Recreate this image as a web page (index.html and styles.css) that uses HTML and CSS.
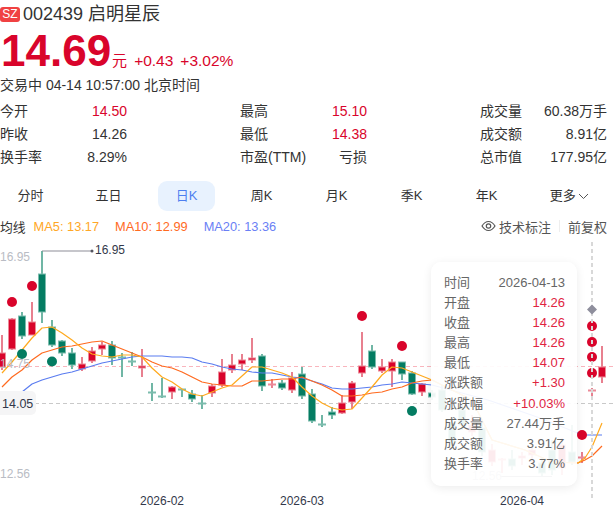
FILE: index.html
```html
<!DOCTYPE html>
<html lang="zh-CN">
<head>
    <meta charset="UTF-8">
    <meta name="viewport" content="width=device-width, initial-scale=1.0">
    <title>启明星辰</title>
    <link rel="stylesheet" href="styles.css">
</head>
<body>
    <div class="title-row">
        <span class="badge">SZ</span>
        <span class="stock-name">002439 启明星辰</span>
    </div>
    <div class="price-row">
        <span class="price">14.69</span>
        <span class="unit">元</span>
        <span class="change">+0.43</span>
        <span class="change">+3.02%</span>
    </div>
    <div class="status">交易中 04-14 10:57:00 北京时间</div>

    <div class="stats">
        <div class="stat"><span>今开</span><span class="up">14.50</span></div>
        <div class="stat"><span>最高</span><span class="up">15.10</span></div>
        <div class="stat"><span>成交量</span><span>60.38万手</span></div>
        <div class="stat"><span>昨收</span><span>14.26</span></div>
        <div class="stat"><span>最低</span><span class="up">14.38</span></div>
        <div class="stat"><span>成交额</span><span>8.91亿</span></div>
        <div class="stat"><span>换手率</span><span>8.29%</span></div>
        <div class="stat"><span>市盈(TTM)</span><span>亏损</span></div>
        <div class="stat"><span>总市值</span><span>177.95亿</span></div>
    </div>

    <div class="tabs">
        <div class="tab tab-wide">分时</div>
        <div class="tab tab-wide">五日</div>
        <div class="tab active">日K</div>
        <div class="tab">周K</div>
        <div class="tab">月K</div>
        <div class="tab">季K</div>
        <div class="tab">年K</div>
        <div class="tab tab-more">更多
            <svg class="chevron" width="11" height="7" viewBox="0 0 11 7"><path d="M1 1l4.500 4.500L10 1"/></svg>
        </div>
    </div>

    <div class="legend">
        <span class="legend-title">均线</span>
        <span class="ma5">MA5: 13.17</span>
        <span class="ma10">MA10: 12.99</span>
        <span class="ma20">MA20: 13.36</span>
        <span class="legend-tools">
            <svg class="eye" width="15" height="12" viewBox="0 0 15 12"><path d="M1 6c2-3.200 4-4.500 6.500-4.500S12 2.800 14 6c-2 3.200-4 4.500-6.500 4.500S3 9.200 1 6z"/><circle cx="7.500" cy="6" r="2.200"/></svg>
            <span>技术标注</span>
            <i class="divider"></i>
            <span>前复权</span>
        </span>
    </div>

    <div class="chart">
        <svg class="chart-svg" width="614" height="283" viewBox="0 240 614 283">
            <line class="guide guide-last" x1="0" y1="366.500" x2="614" y2="366.500"/>
            <line class="guide guide-cross" x1="0" y1="403.500" x2="614" y2="403.500"/>
            <g id="candles"></g>
            <g id="lines"></g>
            <g id="dots"></g>
            <line class="crosshair" x1="592" y1="242" x2="592" y2="498"/>
            <path class="diamond" d="M592 304.500l5 5-5 5-5-5z"/>
            <path class="peak-line" d="M42 251H92"/>
            <circle class="peak-dot" cx="92" cy="251" r="1.500"/>
            <text class="peak-text" x="95" y="254">16.95</text>
            <path class="peak-line" d="M500 476.500H552"/>
            <text class="axis" x="0" y="261">16.95</text>
            <text class="axis" x="0" y="367.500">14.75</text>
            <text class="axis" x="0" y="478">12.56</text>
            <text class="axis" x="472" y="480">12.56</text>
            <rect class="cross-box" x="-6" y="391" width="42" height="24" rx="5"/>
            <text class="cross-text" x="2" y="407.500">14.05</text>
            <text class="date" x="162" y="505">2026-02</text>
            <text class="date" x="302" y="505">2026-03</text>
            <text class="date" x="522" y="505">2026-04</text>
        </svg>

        <div class="tooltip">
            <div class="tip-row"><span>时间</span><span>2026-04-13</span></div>
            <div class="tip-row"><span>开盘</span><span class="tip-up">14.26</span></div>
            <div class="tip-row"><span>收盘</span><span class="tip-up">14.26</span></div>
            <div class="tip-row"><span>最高</span><span class="tip-up">14.26</span></div>
            <div class="tip-row"><span>最低</span><span class="tip-up">14.07</span></div>
            <div class="tip-row"><span>涨跌额</span><span class="tip-up">+1.30</span></div>
            <div class="tip-row"><span>涨跌幅</span><span class="tip-up">+10.03%</span></div>
            <div class="tip-row"><span>成交量</span><span>27.44万手</span></div>
            <div class="tip-row"><span>成交额</span><span>3.91亿</span></div>
            <div class="tip-row"><span>换手率</span><span>3.77%</span></div>
        </div>
    </div>

    <script src="chart.js"></script>
</body>
</html>
```

FILE: styles.css
```css
body { margin: 0; width: 614px; height: 523px; overflow: hidden; background: #fff; color: #333; font-family: "Liberation Sans", "Noto Sans CJK SC", sans-serif; font-size: 14px; }

.title-row { display: flex; align-items: center; gap: 3px; height: 26px; padding-top: 1px; }
.badge { width: 20px; height: 15px; border-radius: 3px; background: #f04142; color: #fff; font-size: 12px; line-height: 15px; text-align: center; }
.stock-name { margin-top: -5px; font-size: 18px; }

.price-row { display: flex; align-items: baseline; height: 45px; padding-top: 1px; padding-left: 1px; color: #d9042b; }
.price { font-size: 44px; line-height: 46px; font-weight: bold; }
.unit { margin-left: 1px; font-size: 15px; }
.change { margin-left: 7px; font-size: 15.500px; }

.status { height: 20px; margin-top: 2px; line-height: 20px; }

.stats { display: grid; grid-template-columns: 127px 127px 127px; column-gap: 113px; row-gap: 3px; margin-top: 6px; }
.stat { display: flex; justify-content: space-between; height: 20px; line-height: 20px; }
.up { color: #d9042b; }

.tabs { display: flex; gap: 18px; margin-top: 14px; padding-left: 2px; }
.tab { width: 57px; height: 30px; border-radius: 9px; line-height: 30px; text-align: center; font-size: 13px; }
.tab-wide { margin-right: 3px; }
.tab.active { background: #e8f2fe; color: #4e7ff0; }
.tab-more { width: 73px; }
.chevron { margin-left: -1px; fill: none; stroke: #555; stroke-width: 1; }

.legend { display: flex; align-items: center; gap: 8px; height: 20px; margin-top: 5px; font-size: 12.800px; }
.ma5 { color: #ffa726; }
.ma10 { margin-left: 8px; color: #ff6a1f; }
.ma20 { margin-left: 8px; color: #6a80f5; }
.legend-tools { display: flex; align-items: center; gap: 4px; margin-left: auto; margin-right: 7px; color: #555; font-size: 13px; }
.eye { margin-right: -1px; fill: none; stroke: #555; stroke-width: 1.200; }
.divider { width: 1px; height: 12px; margin: 0 4px; background: #eee; }

.chart { position: relative; width: 614px; height: 283px; margin-top: 4px; }
.chart-svg { display: block; overflow: hidden; font-family: "Liberation Sans", sans-serif; }
.guide { stroke-width: 1; stroke-dasharray: 4 3; }
.guide-last { stroke: #f9b5bd; }
.guide-cross { stroke: #c9c9c9; }
.crosshair { stroke: #d8d8d8; stroke-width: 2; stroke-dasharray: 4 3; }
.diamond { fill: #8e8e9c; }
.peak-line { fill: none; stroke: #8e8e98; stroke-width: 1.200; }
.peak-dot { fill: #55555f; }
.peak-text { fill: #33384a; font-size: 12px; }
.axis { fill: #b9bcc4; font-size: 12px; }
.cross-box { fill: #f5f5f6; }
.cross-text { fill: #33384a; font-size: 12.500px; }
.date { fill: #33384a; font-size: 12px; text-anchor: middle; }

.wick-up { stroke: #e8808f; stroke-width: 2; }
.wick-down { stroke: #70b6a5; stroke-width: 2; }
.body-up { fill: #d9042b; stroke: #ec8a98; stroke-width: 1; }
.body-down { fill: #047c62; stroke: #7cbcad; stroke-width: 1; }
.dot-up { fill: #d9042b; }
.dot-down { fill: #047c62; }
.line { fill: none; stroke-width: 1.200; stroke-linejoin: round; }
.line-ma5 { stroke: #ffa91e; }
.line-ma10 { stroke: #ff6a1f; }
.line-ma20 { stroke: #5a7cf0; }

.tooltip { position: absolute; left: 431px; top: 22px; width: 146px; height: 224px; box-sizing: border-box; padding: 11px 12px 0 13px; border-radius: 10px; background: rgba(255, 255, 255, 0.92); box-shadow: 0 2px 10px rgba(0, 0, 0, 0.08); color: #666; font-size: 13px; }
.tip-row { display: flex; justify-content: space-between; height: 20.100px; line-height: 20px; }
.tip-up { color: #e0243f; }
```

FILE: chart.js
```js
// x, wick top, wick bottom, body top, body bottom, 1 = up / 0 = down
const candles = [
    [2, 335, 370, 353, 367, 1], [12, 318, 350, 319, 349, 1], [22, 312, 339, 316, 336, 0],
    [32, 302, 335, 322, 335, 1], [42, 251, 323, 274, 312, 0], [52, 320, 347, 327, 345, 0],
    [62, 340, 356, 341, 353, 0], [72, 348, 369, 353, 365, 0], [82, 357, 371, 364, 369, 1],
    [92, 347, 363, 351, 361, 1], [102, 342, 355, 345, 349, 1], [112, 341, 365, 345, 358, 0],
    [122, 353, 377, 357, 358, 0], [132, 352, 366, 361, 362, 0], [142, 349, 377, 366, 368, 1],
    [152, 383, 401, 392, 392, 0], [162, 378, 398, 396, 397, 0], [172, 386, 399, 387, 392, 1],
    [182, 389, 397, 389, 390, 0], [192, 390, 402, 394, 399, 0], [202, 395, 409, 403, 404, 0],
    [212, 384, 397, 386, 393, 1], [222, 359, 387, 372, 385, 1], [232, 354, 373, 365, 370, 1],
    [242, 354, 370, 360, 364, 1], [252, 338, 363, 358, 360, 1], [262, 354, 391, 356, 386, 0],
    [272, 379, 388, 384, 385, 1], [282, 380, 390, 383, 388, 0], [292, 372, 393, 378, 390, 1],
    [302, 367, 399, 374, 396, 0], [312, 389, 423, 394, 421, 0], [322, 415, 427, 424, 424, 0],
    [332, 407, 419, 412, 415, 0], [342, 395, 414, 403, 413, 1], [352, 381, 409, 383, 402, 1],
    [362, 332, 377, 366, 373, 1], [372, 345, 369, 351, 367, 0], [382, 359, 373, 367, 371, 1],
    [392, 359, 387, 362, 371, 1], [402, 362, 380, 362, 374, 0], [412, 371, 395, 373, 394, 0],
    [422, 383, 396, 384, 392, 1], [432, 390, 400, 393, 397, 0], [442, 385, 412, 390, 410, 0],
    [452, 418, 446, 423, 442, 0], [462, 405, 430, 410, 425, 0], [472, 415, 436, 425, 432, 1],
    [482, 422, 456, 428, 452, 0], [492, 444, 466, 450, 462, 1], [502, 458, 473, 459, 460, 1],
    [512, 450, 470, 459, 466, 0], [522, 452, 465, 456, 458, 1], [532, 446, 462, 450, 455, 1],
    [542, 458, 476, 463, 473, 0], [552, 440, 475, 450, 470, 0], [562, 438, 475, 445, 468, 1],
    [572, 425, 465, 452, 462, 0], [582, 452, 463, 457, 458, 1], [592, 388, 400, 390, 391, 1],
    [602, 346, 383, 367, 377, 1]
];

const ma5 = [373, 362, 350, 338, 328, 327, 333, 340, 348, 354, 356, 357, 355, 355, 357, 368, 377, 382, 389, 394, 396, 392, 388, 385, 376, 367, 367, 370, 373, 377, 387, 396, 403, 408, 410, 409, 398, 387, 375, 367, 368, 372, 376, 380];
const ma10 = [387, 377, 370, 360, 353, 350, 347, 346, 344, 342, 341, 345, 349, 353, 357, 362, 366, 368, 372, 377, 382, 384, 385, 386, 386, 381, 381, 380, 379, 379, 377, 381, 385, 390, 396, 396, 395, 393, 392, 389, 387, 383, 381, 380];
const ma20 = [402, 397, 392, 384, 380, 377, 374, 372, 369, 366, 363, 361, 359, 357, 356, 356, 356, 357, 357, 358, 362, 364, 367, 369, 370, 372, 373, 373, 375, 377, 378, 381, 384, 388, 389, 389, 388, 387, 385, 384, 382, 383, 384, 385];

// the stretch behind the tooltip and on to the right edge, from x = 432
const tail5 = [[472, 400], [492, 440], [525, 450], [552, 462], [578, 463], [585, 458], [592, 447], [597, 435], [602, 423]];
const tail10 = [[472, 400], [492, 440], [525, 450], [552, 462], [578, 463], [585, 460], [592, 456], [597, 451], [602, 446]];
const tail20 = [[488, 400], [540, 418], [575, 432], [582, 435], [602, 435]];

const dots = [
    [12, 302, 1], [32, 286, 1], [22, 354, 0], [52, 361.5, 0], [362, 316, 1], [402, 346, 1],
    [412, 411, 0], [592, 326, 1], [592, 342, 1], [592, 357, 1], [592, 373, 1], [582, 435, 1]
];

document.getElementById('candles').innerHTML = candles.map(([x, top, bottom, bodyTop, bodyBottom, up]) => {
    const kind = up ? 'up' : 'down';
    const height = Math.max(bodyBottom - bodyTop, 1);
    return `<line class="wick-${kind}" x1="${x}" y1="${top}" x2="${x}" y2="${bottom}"/>` +
        `<rect class="body-${kind}" x="${x - 3.5}" y="${bodyTop}" width="7" height="${height}"/>`;
}).join('');

function points(values, tail) {
    const head = values.map((y, i) => `${2 + i * 10},${y}`);
    return head.concat(tail.map(p => p.join(','))).join(' ');
}

document.getElementById('lines').innerHTML =
    `<polyline class="line line-ma20" points="${points(ma20, tail20)}"/>` +
    `<polyline class="line line-ma10" points="${points(ma10, tail10)}"/>` +
    `<polyline class="line line-ma5" points="${points(ma5, tail5)}"/>`;

document.getElementById('dots').innerHTML = dots.map(([x, y, up]) =>
    `<circle class="${up ? 'dot-up' : 'dot-down'}" cx="${x}" cy="${y}" r="5"/>`).join('');
```
